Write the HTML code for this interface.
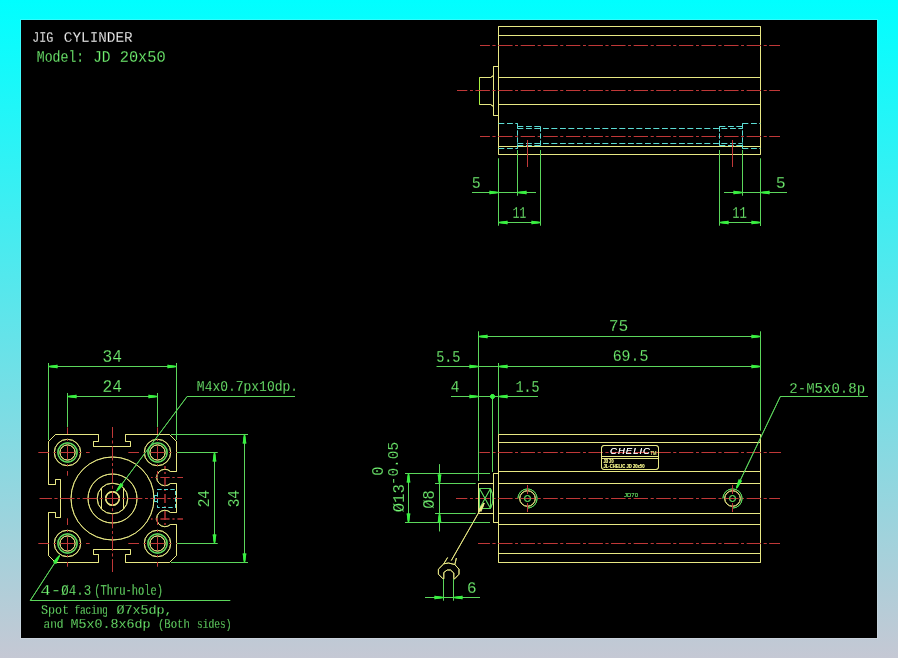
<!DOCTYPE html>
<html><head><meta charset="utf-8"><title>JIG CYLINDER JD 20x50</title><style>
html,body{margin:0;padding:0;width:898px;height:658px;overflow:hidden;background:linear-gradient(to bottom,#00ffff 0%,#c5c8d4 100%);}
svg{position:absolute;left:0;top:0;display:block;}
text{font-family:"Liberation Mono",monospace;stroke:#000;stroke-width:0.3px;}
text.s{font-family:"Liberation Sans",sans-serif;stroke:none;}
</style></head><body>
<svg width="898" height="658" viewBox="0 0 898 658">
<defs><filter id="soft" x="0" y="0" width="898" height="658" filterUnits="userSpaceOnUse"><feGaussianBlur in="SourceGraphic" stdDeviation="0.7" result="b"/><feComponentTransfer in="b" result="b2"><feFuncA type="linear" slope="0.8"/></feComponentTransfer><feMerge><feMergeNode in="b2"/><feMergeNode in="SourceGraphic"/></feMerge></filter></defs>
<rect x="20.5" y="19.5" width="857" height="619" fill="none" stroke="rgba(255,255,255,0.18)"/>
<rect x="21" y="20" width="856" height="618" fill="#000"/>
<g filter="url(#soft)">
<line x1="498.5" y1="26.5" x2="760.5" y2="26.5" stroke="#e8e884" stroke-width="1"/>
<line x1="498.5" y1="35.5" x2="760.5" y2="35.5" stroke="#e8e884" stroke-width="1"/>
<line x1="498.5" y1="77.5" x2="760.5" y2="77.5" stroke="#e8e884" stroke-width="1"/>
<line x1="498.5" y1="104.5" x2="760.5" y2="104.5" stroke="#e8e884" stroke-width="1"/>
<line x1="498.5" y1="146.5" x2="760.5" y2="146.5" stroke="#e8e884" stroke-width="1"/>
<line x1="498.5" y1="154.5" x2="760.5" y2="154.5" stroke="#e8e884" stroke-width="1"/>
<line x1="498.5" y1="26.5" x2="498.5" y2="154.5" stroke="#e8e884" stroke-width="1"/>
<line x1="760.5" y1="26.5" x2="760.5" y2="154.5" stroke="#e8e884" stroke-width="1"/>
<polyline points="498.5,66.5 493.5,66.5 493.5,115.5 498.5,115.5" fill="none" stroke="#e8e884" stroke-width="1"/>
<polyline points="493.5,75.5 490.5,77.5 479.5,77.5" fill="none" stroke="#e8e884" stroke-width="1"/>
<polyline points="493.5,106.5 490.5,104.5 479.5,104.5" fill="none" stroke="#e8e884" stroke-width="1"/>
<line x1="479.5" y1="77.5" x2="479.5" y2="104.5" stroke="#a8f040" stroke-width="1"/>
<line x1="480" y1="45.5" x2="780" y2="45.5" stroke="#c03838" stroke-dasharray="14.2 2.8 2.8 2.8" stroke-dashoffset="4.40"/>
<line x1="457" y1="90.5" x2="780" y2="90.5" stroke="#c03838" stroke-dasharray="14.2 2.8 2.8 2.8" stroke-dashoffset="4.00"/>
<line x1="480" y1="136.5" x2="780" y2="136.5" stroke="#c03838" stroke-dasharray="14.2 2.8 2.8 2.8" stroke-dashoffset="4.40"/>
<line x1="498.5" y1="123.5" x2="517.5" y2="123.5" stroke="#5cdcd4" stroke-width="1" stroke-dasharray="5.7 2.8"/>
<line x1="517.5" y1="123.5" x2="517.5" y2="148.5" stroke="#5cdcd4" stroke-width="1" stroke-dasharray="5 2"/>
<line x1="517.5" y1="126.5" x2="540.5" y2="126.5" stroke="#5cdcd4" stroke-width="1" stroke-dasharray="5.7 2.8"/>
<line x1="540.5" y1="126.5" x2="540.5" y2="145.5" stroke="#5cdcd4" stroke-width="1" stroke-dasharray="5 2"/>
<line x1="517.5" y1="128.5" x2="742.5" y2="128.5" stroke="#5cdcd4" stroke-width="1" stroke-dasharray="5.7 2.8"/>
<line x1="517.5" y1="143.5" x2="742.5" y2="143.5" stroke="#5cdcd4" stroke-width="1" stroke-dasharray="5.7 2.8"/>
<line x1="517.5" y1="145.5" x2="540.5" y2="145.5" stroke="#5cdcd4" stroke-width="1" stroke-dasharray="5.7 2.8"/>
<line x1="498.5" y1="148.5" x2="517.5" y2="148.5" stroke="#5cdcd4" stroke-width="1" stroke-dasharray="5.7 2.8"/>
<line x1="742.5" y1="123.5" x2="760.5" y2="123.5" stroke="#5cdcd4" stroke-width="1" stroke-dasharray="5.7 2.8"/>
<line x1="742.5" y1="123.5" x2="742.5" y2="148.5" stroke="#5cdcd4" stroke-width="1" stroke-dasharray="5 2"/>
<line x1="719.5" y1="126.5" x2="742.5" y2="126.5" stroke="#5cdcd4" stroke-width="1" stroke-dasharray="5.7 2.8"/>
<line x1="719.5" y1="126.5" x2="719.5" y2="145.5" stroke="#5cdcd4" stroke-width="1" stroke-dasharray="5 2"/>
<line x1="719.5" y1="145.5" x2="742.5" y2="145.5" stroke="#5cdcd4" stroke-width="1" stroke-dasharray="5.7 2.8"/>
<line x1="742.5" y1="148.5" x2="760.5" y2="148.5" stroke="#5cdcd4" stroke-width="1" stroke-dasharray="5.7 2.8"/>
<line x1="527.5" y1="140" x2="527.5" y2="167" stroke="#c03838" stroke-width="1"/>
<line x1="732.5" y1="140" x2="732.5" y2="167" stroke="#c03838" stroke-width="1"/>
<line x1="498.5" y1="158.5" x2="498.5" y2="225.5" stroke="#5cd65c" stroke-width="1"/>
<line x1="517.5" y1="150" x2="517.5" y2="195.5" stroke="#5cd65c" stroke-width="1"/>
<line x1="540.5" y1="150" x2="540.5" y2="225.5" stroke="#5cd65c" stroke-width="1"/>
<line x1="719.5" y1="150" x2="719.5" y2="225.5" stroke="#5cd65c" stroke-width="1"/>
<line x1="742.5" y1="150" x2="742.5" y2="195.5" stroke="#5cd65c" stroke-width="1"/>
<line x1="760.5" y1="158.5" x2="760.5" y2="226" stroke="#5cd65c" stroke-width="1"/>
<line x1="472" y1="192.5" x2="536" y2="192.5" stroke="#5cd65c" stroke-width="1"/>
<polygon points="498.50,193.00 495.50,193.60 489.50,194.30 489.50,190.70 495.50,191.40 498.50,192.00" fill="#38f040"/>
<polygon points="517.50,192.00 520.50,191.40 526.50,190.70 526.50,194.30 520.50,193.60 517.50,193.00" fill="#38f040"/>
<line x1="498.5" y1="222.5" x2="540.5" y2="222.5" stroke="#5cd65c" stroke-width="1"/>
<polygon points="498.50,222.00 501.50,221.40 507.50,220.70 507.50,224.30 501.50,223.60 498.50,223.00" fill="#38f040"/>
<polygon points="540.50,223.00 537.50,223.60 531.50,224.30 531.50,220.70 537.50,221.40 540.50,222.00" fill="#38f040"/>
<line x1="724" y1="192.5" x2="787" y2="192.5" stroke="#5cd65c" stroke-width="1"/>
<polygon points="742.50,193.00 739.50,193.60 733.50,194.30 733.50,190.70 739.50,191.40 742.50,192.00" fill="#38f040"/>
<polygon points="760.50,192.00 763.50,191.40 769.50,190.70 769.50,194.30 763.50,193.60 760.50,193.00" fill="#38f040"/>
<line x1="719.5" y1="222.5" x2="760.5" y2="222.5" stroke="#5cd65c" stroke-width="1"/>
<polygon points="719.50,222.00 722.50,221.40 728.50,220.70 728.50,224.30 722.50,223.60 719.50,223.00" fill="#38f040"/>
<polygon points="760.50,223.00 757.50,223.60 751.50,224.30 751.50,220.70 757.50,221.40 760.50,222.00" fill="#38f040"/>
<line x1="498.5" y1="434.5" x2="760.5" y2="434.5" stroke="#e8e884" stroke-width="1"/>
<line x1="498.5" y1="442.5" x2="760.5" y2="442.5" stroke="#e8e884" stroke-width="1"/>
<line x1="498.5" y1="471.5" x2="760.5" y2="471.5" stroke="#e8e884" stroke-width="1"/>
<line x1="498.5" y1="483.5" x2="760.5" y2="483.5" stroke="#e8e884" stroke-width="1"/>
<line x1="498.5" y1="513.5" x2="760.5" y2="513.5" stroke="#e8e884" stroke-width="1"/>
<line x1="498.5" y1="524.5" x2="760.5" y2="524.5" stroke="#e8e884" stroke-width="1"/>
<line x1="498.5" y1="553.5" x2="760.5" y2="553.5" stroke="#e8e884" stroke-width="1"/>
<line x1="498.5" y1="562.5" x2="760.5" y2="562.5" stroke="#e8e884" stroke-width="1"/>
<line x1="498.5" y1="434.5" x2="498.5" y2="562.5" stroke="#e8e884" stroke-width="1"/>
<line x1="760.5" y1="434.5" x2="760.5" y2="562.5" stroke="#e8e884" stroke-width="1"/>
<line x1="479.6" y1="452.5" x2="781" y2="452.5" stroke="#c03838" stroke-dasharray="14.2 2.8 2.8 2.8" stroke-dashoffset="4.00"/>
<line x1="456" y1="498.5" x2="780" y2="498.5" stroke="#c03838" stroke-dasharray="14.2 2.8 2.8 2.8" stroke-dashoffset="3.00"/>
<line x1="478" y1="543.5" x2="780" y2="543.5" stroke="#c03838" stroke-dasharray="14.2 2.8 2.8 2.8" stroke-dashoffset="2.40"/>
<polyline points="498.5,473.5 493.5,473.5 493.5,522.5 498.5,522.5" fill="none" stroke="#e8e884" stroke-width="1"/>
<polyline points="493.5,483.5 478.5,483.5 478.5,513.5 493.5,513.5" fill="none" stroke="#e8e884" stroke-width="1"/>
<polygon points="479.5,488.5 490.5,488.5 490.5,508.5 479.5,508.5" fill="none" stroke="#5cd65c" stroke-width="1"/>
<line x1="479.5" y1="488.5" x2="490.5" y2="508.5" stroke="#5cd65c" stroke-width="1"/>
<line x1="490.5" y1="488.5" x2="479.5" y2="508.5" stroke="#5cd65c" stroke-width="1"/>
<path d="M490.5,488.5 Q495.5,498.5 490.5,508.5" stroke="#5cd65c" fill="none"/>
<circle cx="527.5" cy="498.5" r="7.8" fill="none" stroke="#e8e884" stroke-width="1"/>
<path d="M517.9,498.5 A9.6,9.6 0 1 1 527.5,508.1" stroke="#5cd65c" fill="none"/>
<circle cx="527.5" cy="498.5" r="3" fill="none" stroke="#5cd65c" stroke-width="1"/>
<line x1="527.5" y1="485" x2="527.5" y2="494" stroke="#c03838" stroke-width="1"/>
<line x1="527.5" y1="503" x2="527.5" y2="512" stroke="#c03838" stroke-width="1"/>
<circle cx="732.5" cy="498.5" r="7.8" fill="none" stroke="#e8e884" stroke-width="1"/>
<path d="M722.9,498.5 A9.6,9.6 0 1 1 732.5,508.1" stroke="#5cd65c" fill="none"/>
<circle cx="732.5" cy="498.5" r="3" fill="none" stroke="#5cd65c" stroke-width="1"/>
<line x1="732.5" y1="485" x2="732.5" y2="494" stroke="#c03838" stroke-width="1"/>
<line x1="732.5" y1="503" x2="732.5" y2="512" stroke="#c03838" stroke-width="1"/>
<rect x="601.5" y="445.5" width="57" height="24" rx="2.5" fill="none" stroke="#e8e884"/>
<line x1="601.5" y1="456.5" x2="658.5" y2="456.5" stroke="#e8e884" stroke-width="1"/>
<line x1="601.5" y1="458.5" x2="658.5" y2="458.5" stroke="#e8e884" stroke-width="1"/>
<text class="s" x="610" y="454.3" fill="#ffffff" font-size="9.5" textLength="41" lengthAdjust="spacingAndGlyphs" font-style="italic" letter-spacing="1">CHELIC</text>
<text class="s" x="650.5" y="455" fill="#e8e884" font-size="4.5" textLength="6" lengthAdjust="spacingAndGlyphs" >TM</text>
<text class="s" x="603.5" y="462.8" fill="#e8e884" font-size="4.5" textLength="10" lengthAdjust="spacingAndGlyphs" font-weight="bold">JD 20</text>
<text class="s" x="603.5" y="468.2" fill="#e8e884" font-size="4.5" textLength="41" lengthAdjust="spacingAndGlyphs" font-weight="bold">JL-CHELIC JD 20x50</text>
<text class="s" x="624" y="497" fill="#5cd65c" font-size="6" textLength="14" lengthAdjust="spacingAndGlyphs" >JD70</text>
<line x1="478.5" y1="331.5" x2="478.5" y2="481" stroke="#5cd65c" stroke-width="1"/>
<line x1="760.5" y1="331.5" x2="760.5" y2="430.5" stroke="#5cd65c" stroke-width="1"/>
<line x1="498.5" y1="363" x2="498.5" y2="434" stroke="#5cd65c" stroke-width="1"/>
<line x1="492.5" y1="396" x2="492.5" y2="472" stroke="#5cd65c" stroke-width="1"/>
<line x1="405" y1="473.5" x2="490" y2="473.5" stroke="#5cd65c" stroke-width="1"/>
<line x1="405" y1="522.5" x2="490" y2="522.5" stroke="#5cd65c" stroke-width="1"/>
<line x1="435" y1="483.5" x2="475.5" y2="483.5" stroke="#5cd65c" stroke-width="1"/>
<line x1="435" y1="513.5" x2="475.5" y2="513.5" stroke="#5cd65c" stroke-width="1"/>
<line x1="478.5" y1="336.5" x2="760.5" y2="336.5" stroke="#5cd65c" stroke-width="1"/>
<polygon points="478.50,336.00 481.50,335.40 487.50,334.70 487.50,338.30 481.50,337.60 478.50,337.00" fill="#38f040"/>
<polygon points="760.50,337.00 757.50,337.60 751.50,338.30 751.50,334.70 757.50,335.40 760.50,336.00" fill="#38f040"/>
<line x1="436.7" y1="366.5" x2="760.5" y2="366.5" stroke="#5cd65c" stroke-width="1"/>
<polygon points="478.50,367.00 475.50,367.60 469.50,368.30 469.50,364.70 475.50,365.40 478.50,366.00" fill="#38f040"/>
<polygon points="498.50,366.00 501.50,365.40 507.50,364.70 507.50,368.30 501.50,367.60 498.50,367.00" fill="#38f040"/>
<polygon points="760.50,367.00 757.50,367.60 751.50,368.30 751.50,364.70 757.50,365.40 760.50,366.00" fill="#38f040"/>
<line x1="451" y1="396.5" x2="537.8" y2="396.5" stroke="#5cd65c" stroke-width="1"/>
<polygon points="478.50,397.00 475.50,397.60 469.50,398.30 469.50,394.70 475.50,395.40 478.50,396.00" fill="#38f040"/>
<polygon points="498.50,396.00 501.50,395.40 507.50,394.70 507.50,398.30 501.50,397.60 498.50,397.00" fill="#38f040"/>
<circle cx="492.5" cy="396.5" r="2" fill="#38f040" stroke="#38f040" stroke-width="1"/>
<line x1="408.5" y1="473.5" x2="408.5" y2="522.5" stroke="#5cd65c" stroke-width="1"/>
<polygon points="409.00,473.50 409.60,476.50 410.30,482.50 406.70,482.50 407.40,476.50 408.00,473.50" fill="#38f040"/>
<polygon points="408.00,522.50 407.40,519.50 406.70,513.50 410.30,513.50 409.60,519.50 409.00,522.50" fill="#38f040"/>
<line x1="439.5" y1="464.3" x2="439.5" y2="531.3" stroke="#5cd65c" stroke-width="1"/>
<polygon points="439.00,483.50 438.40,480.50 437.70,474.50 441.30,474.50 440.60,480.50 440.00,483.50" fill="#38f040"/>
<polygon points="440.00,513.50 440.60,516.50 441.30,522.50 437.70,522.50 438.40,516.50 439.00,513.50" fill="#38f040"/>
<polyline points="867.8,396.5 780.3,396.5 736.5,488.2" fill="none" stroke="#5cd65c" stroke-width="1"/>
<polygon points="736.05,487.98 736.80,485.02 738.75,479.30 742.00,480.85 738.79,485.97 736.95,488.42" fill="#38f040"/>
<line x1="484.1" y1="503.1" x2="451.3" y2="560.5" stroke="#e8e884" stroke-width="1"/>
<polygon points="484.53,503.35 483.57,506.25 481.20,511.81 478.07,510.02 481.66,505.16 483.67,502.85" fill="#e8e884"/>
<polygon points="443,578.8 438.4,574.2 438.4,569.2 443.8,563.8 448.5,563 454.7,564.5 459,569.2 459,574.2 454.7,578.8 453.8,578.8 453.8,573 450.5,570 447.2,570 443.8,572.5 443.8,578.8" fill="none" stroke="#e8e884" stroke-width="1"/>
<line x1="443.8" y1="563.8" x2="447.6" y2="557.5" stroke="#e8e884" stroke-width="1"/>
<line x1="454.7" y1="565" x2="456.4" y2="558" stroke="#e8e884" stroke-width="1"/>
<line x1="443.5" y1="579" x2="443.5" y2="600.5" stroke="#5cd65c" stroke-width="1"/>
<line x1="453.5" y1="579" x2="453.5" y2="600.5" stroke="#5cd65c" stroke-width="1"/>
<line x1="425" y1="597.5" x2="480" y2="597.5" stroke="#5cd65c" stroke-width="1"/>
<polygon points="443.50,598.00 440.50,598.60 434.50,599.30 434.50,595.70 440.50,596.40 443.50,597.00" fill="#38f040"/>
<polygon points="453.50,597.00 456.50,596.40 462.50,595.70 462.50,599.30 456.50,598.60 453.50,598.00" fill="#38f040"/>
<path d="M48.5,441.5 L55.5,434.5 L98.5,434.5 L98.5,441.5 L93.5,441.5 L93.5,446.5 L130.5,446.5 L130.5,441.5 L125.5,441.5 L125.5,434.5 L169.5,434.5 L176.5,441.5 L176.5,471.5 L170.5,471.5 A8.2,8.2 0 1 0 170.5,483.5 L176.5,483.5 L176.5,512.5 L170.5,512.5 A8.2,8.2 0 1 0 170.5,524.5 L176.5,524.5 L176.5,555.5 L169.5,562.5 L125.5,562.5 L125.5,554.5 L130.5,554.5 L130.5,549.5 L93.5,549.5 L93.5,554.5 L98.5,554.5 L98.5,562.5 L55.5,562.5 L48.5,555.5 L48.5,512.5 L55.5,512.5 L55.5,517.5 L60.5,517.5 L60.5,479.5 L55.5,479.5 L55.5,484.5 L48.5,484.5 Z" fill="none" stroke="#e8e884"/>
<circle cx="112.5" cy="498.5" r="41.5" fill="none" stroke="#e8e884" stroke-width="1"/>
<circle cx="112.5" cy="498.5" r="24.5" fill="none" stroke="#e8e884" stroke-width="1"/>
<circle cx="112.5" cy="498.5" r="15.3" fill="none" stroke="#e8e884" stroke-width="1"/>
<line x1="101.5" y1="488" x2="101.5" y2="509" stroke="#e8e884" stroke-width="1"/>
<line x1="123.5" y1="488" x2="123.5" y2="509" stroke="#e8e884" stroke-width="1"/>
<circle cx="112.5" cy="498.5" r="6.8" fill="none" stroke="#e8e884" stroke-width="1.4"/>
<circle cx="67.5" cy="452.5" r="13.2" fill="none" stroke="#e8e884" stroke-width="1"/>
<circle cx="67.5" cy="452.5" r="9.6" fill="none" stroke="#5cd65c" stroke-width="1.3"/>
<circle cx="67.5" cy="452.5" r="7.6" fill="none" stroke="#e8e884" stroke-width="1"/>
<line x1="38.5" y1="452.5" x2="89.5" y2="452.5" stroke="#c03838" stroke-dasharray="13 5 2 5" stroke-dashoffset="2.50"/>
<line x1="67.5" y1="427.5" x2="67.5" y2="475.5" stroke="#c03838" stroke-dasharray="13 5 2 5" stroke-dashoffset="6.50"/>
<circle cx="157.5" cy="452.5" r="13.2" fill="none" stroke="#e8e884" stroke-width="1"/>
<circle cx="157.5" cy="452.5" r="9.6" fill="none" stroke="#5cd65c" stroke-width="1.3"/>
<circle cx="157.5" cy="452.5" r="7.6" fill="none" stroke="#e8e884" stroke-width="1"/>
<line x1="128.5" y1="452.5" x2="179.5" y2="452.5" stroke="#c03838" stroke-dasharray="13 5 2 5" stroke-dashoffset="2.50"/>
<line x1="157.5" y1="427.5" x2="157.5" y2="475.5" stroke="#c03838" stroke-dasharray="13 5 2 5" stroke-dashoffset="6.50"/>
<circle cx="67.5" cy="543.5" r="13.2" fill="none" stroke="#e8e884" stroke-width="1"/>
<circle cx="67.5" cy="543.5" r="9.6" fill="none" stroke="#5cd65c" stroke-width="1.3"/>
<circle cx="67.5" cy="543.5" r="7.6" fill="none" stroke="#e8e884" stroke-width="1"/>
<line x1="38.5" y1="543.5" x2="89.5" y2="543.5" stroke="#c03838" stroke-dasharray="13 5 2 5" stroke-dashoffset="2.50"/>
<line x1="67.5" y1="518.5" x2="67.5" y2="566.5" stroke="#c03838" stroke-dasharray="13 5 2 5" stroke-dashoffset="6.50"/>
<circle cx="157.5" cy="543.5" r="13.2" fill="none" stroke="#e8e884" stroke-width="1"/>
<circle cx="157.5" cy="543.5" r="9.6" fill="none" stroke="#5cd65c" stroke-width="1.3"/>
<circle cx="157.5" cy="543.5" r="7.6" fill="none" stroke="#e8e884" stroke-width="1"/>
<line x1="128.5" y1="543.5" x2="179.5" y2="543.5" stroke="#c03838" stroke-dasharray="13 5 2 5" stroke-dashoffset="2.50"/>
<line x1="157.5" y1="518.5" x2="157.5" y2="566.5" stroke="#c03838" stroke-dasharray="13 5 2 5" stroke-dashoffset="6.50"/>
<line x1="39.7" y1="498.5" x2="182" y2="498.5" stroke="#c03838" stroke-dasharray="14.2 2.8 2.8 2.8" stroke-dashoffset="2.10"/>
<line x1="112.5" y1="427" x2="112.5" y2="572" stroke="#c03838" stroke-dasharray="14.2 2.8 2.8 2.8" stroke-dashoffset="3.40"/>
<line x1="151" y1="477.5" x2="183" y2="477.5" stroke="#c03838" stroke-dasharray="9 3 2 3" stroke-dashoffset="7.50"/>
<line x1="151" y1="519" x2="183" y2="519" stroke="#c03838" stroke-dasharray="9 3 2 3" stroke-dashoffset="7.50"/>
<line x1="165" y1="466" x2="165" y2="528" stroke="#c03838" stroke-dasharray="9 3 2 3" stroke-dashoffset="6.00"/>
<polygon points="157.5,489.5 175.5,489.5 175.5,507.5 157.5,507.5" fill="none" stroke="#5cdcd4" stroke-width="1" stroke-dasharray="4 2.5"/>
<polyline points="157.5,495.5 154.5,495.5 154.5,501.5 157.5,501.5" fill="none" stroke="#5cdcd4" stroke-width="1"/>
<line x1="48.5" y1="363" x2="48.5" y2="440" stroke="#5cd65c" stroke-width="1"/>
<line x1="176.5" y1="363" x2="176.5" y2="440" stroke="#5cd65c" stroke-width="1"/>
<line x1="67.5" y1="393" x2="67.5" y2="427" stroke="#5cd65c" stroke-width="1"/>
<line x1="157.5" y1="393" x2="157.5" y2="427" stroke="#5cd65c" stroke-width="1"/>
<line x1="48.5" y1="366.5" x2="176.5" y2="366.5" stroke="#5cd65c" stroke-width="1"/>
<polygon points="48.50,366.00 51.50,365.40 57.50,364.70 57.50,368.30 51.50,367.60 48.50,367.00" fill="#38f040"/>
<polygon points="176.50,367.00 173.50,367.60 167.50,368.30 167.50,364.70 173.50,365.40 176.50,366.00" fill="#38f040"/>
<line x1="67.5" y1="396.5" x2="157.5" y2="396.5" stroke="#5cd65c" stroke-width="1"/>
<polygon points="67.50,396.00 70.50,395.40 76.50,394.70 76.50,398.30 70.50,397.60 67.50,397.00" fill="#38f040"/>
<polygon points="157.50,397.00 154.50,397.60 148.50,398.30 148.50,394.70 154.50,395.40 157.50,396.00" fill="#38f040"/>
<line x1="171" y1="434.5" x2="248" y2="434.5" stroke="#5cd65c" stroke-width="1"/>
<line x1="171" y1="562.5" x2="248" y2="562.5" stroke="#5cd65c" stroke-width="1"/>
<line x1="177" y1="452.5" x2="217.5" y2="452.5" stroke="#5cd65c" stroke-width="1"/>
<line x1="177" y1="543.5" x2="217.5" y2="543.5" stroke="#5cd65c" stroke-width="1"/>
<line x1="244.5" y1="434.5" x2="244.5" y2="562.5" stroke="#5cd65c" stroke-width="1"/>
<polygon points="245.00,434.50 245.60,437.50 246.30,443.50 242.70,443.50 243.40,437.50 244.00,434.50" fill="#38f040"/>
<polygon points="244.00,562.50 243.40,559.50 242.70,553.50 246.30,553.50 245.60,559.50 245.00,562.50" fill="#38f040"/>
<line x1="214.5" y1="452.5" x2="214.5" y2="543.5" stroke="#5cd65c" stroke-width="1"/>
<polygon points="215.00,452.50 215.60,455.50 216.30,461.50 212.70,461.50 213.40,455.50 214.00,452.50" fill="#38f040"/>
<polygon points="214.00,543.50 213.40,540.50 212.70,534.50 216.30,534.50 215.60,540.50 215.00,543.50" fill="#38f040"/>
<polyline points="295,396.5 187.1,396.5 116.6,491.2" fill="none" stroke="#5cd65c" stroke-width="1"/>
<polygon points="116.20,490.90 117.51,488.14 120.53,482.90 123.42,485.05 119.27,489.45 117.00,491.50" fill="#38f040"/>
<polyline points="230.2,600.5 30.3,600.5 59.5,555.5" fill="none" stroke="#5cd65c" stroke-width="1"/>
<polygon points="59.92,555.77 58.79,558.62 56.11,564.03 53.09,562.07 56.94,557.42 59.08,555.23" fill="#38f040"/>
<text x="32.31" y="41.5" fill="#ffffff" font-size="14.88" textLength="21.11" lengthAdjust="spacingAndGlyphs">JIG</text>
<text x="63.81" y="41.5" fill="#ffffff" font-size="14.88" textLength="68.91" lengthAdjust="spacingAndGlyphs">CYLINDER</text>
<text x="36.72" y="61.5" fill="#74f874" font-size="15.94" textLength="47.54" lengthAdjust="spacingAndGlyphs">Model:</text>
<text x="93.22" y="61.5" fill="#74f874" font-size="15.94" textLength="17.32" lengthAdjust="spacingAndGlyphs">JD</text>
<text x="119.72" y="61.5" fill="#74f874" font-size="15.94" textLength="45.95" lengthAdjust="spacingAndGlyphs">20x50</text>
<text x="471.70" y="187.7" fill="#74f874" font-size="16.24" textLength="8.88" lengthAdjust="spacingAndGlyphs">5</text>
<text x="512.75" y="217.5" fill="#74f874" font-size="15.64" textLength="13.54" lengthAdjust="spacingAndGlyphs">11</text>
<text x="775.70" y="187.7" fill="#74f874" font-size="16.24" textLength="9.87" lengthAdjust="spacingAndGlyphs">5</text>
<text x="732.25" y="217.5" fill="#74f874" font-size="15.64" textLength="14.61" lengthAdjust="spacingAndGlyphs">11</text>
<text x="608.72" y="330.8" fill="#74f874" font-size="15.94" textLength="19.48" lengthAdjust="spacingAndGlyphs">75</text>
<text x="436.13" y="361.8" fill="#74f874" font-size="17.16" textLength="24.32" lengthAdjust="spacingAndGlyphs">5.5</text>
<text x="612.66" y="361.4" fill="#74f874" font-size="16.70" textLength="35.67" lengthAdjust="spacingAndGlyphs">69.5</text>
<text x="450.66" y="392" fill="#74f874" font-size="16.70" textLength="8.64" lengthAdjust="spacingAndGlyphs">4</text>
<text x="515.66" y="392" fill="#74f874" font-size="16.70" textLength="23.79" lengthAdjust="spacingAndGlyphs">1.5</text>
<text x="789.31" y="392.8" fill="#74f874" font-size="14.88" textLength="75.83" lengthAdjust="spacingAndGlyphs">2-M5x0.8p</text>
<text x="102.60" y="362" fill="#74f874" font-size="17.46" textLength="19.47" lengthAdjust="spacingAndGlyphs">34</text>
<text x="102.59" y="392.4" fill="#74f874" font-size="17.61" textLength="19.47" lengthAdjust="spacingAndGlyphs">24</text>
<text x="196.85" y="390.9" fill="#74f874" font-size="14.42" textLength="101.19" lengthAdjust="spacingAndGlyphs">M4x0.7px10dp.</text>
<text x="40.36" y="594.8" fill="#74f874" font-size="14.27" textLength="20.85" lengthAdjust="spacingAndGlyphs">4-</text>
<text x="61.36" y="594.8" fill="#74f874" font-size="14.27" textLength="29.73" lengthAdjust="spacingAndGlyphs">Ø4.3</text>
<text x="94.36" y="594.8" fill="#74f874" font-size="14.27" textLength="68.68" lengthAdjust="spacingAndGlyphs">(Thru-hole)</text>
<text x="40.92" y="613.9" fill="#74f874" font-size="13.51" textLength="28.12" lengthAdjust="spacingAndGlyphs">Spot</text>
<text x="74.42" y="613.9" fill="#74f874" font-size="13.51" textLength="33.53" lengthAdjust="spacingAndGlyphs">facing</text>
<text x="116.42" y="613.9" fill="#74f874" font-size="13.51" textLength="56.19" lengthAdjust="spacingAndGlyphs">Ø7x5dp,</text>
<text x="43.47" y="627.8" fill="#74f874" font-size="12.90" textLength="19.99" lengthAdjust="spacingAndGlyphs">and</text>
<text x="70.47" y="627.8" fill="#74f874" font-size="12.90" textLength="80.10" lengthAdjust="spacingAndGlyphs">M5x0.8x6dp</text>
<text x="157.97" y="627.8" fill="#74f874" font-size="12.90" textLength="31.89" lengthAdjust="spacingAndGlyphs">(Both</text>
<text x="196.97" y="627.8" fill="#74f874" font-size="12.90" textLength="34.57" lengthAdjust="spacingAndGlyphs">sides)</text>
<text x="467.12" y="592.8" fill="#74f874" font-size="17.31" textLength="9.53" lengthAdjust="spacingAndGlyphs">6</text>
<text x="209" y="507.34" fill="#74f874" font-size="16.70" textLength="17.38" lengthAdjust="spacingAndGlyphs" transform="rotate(-90 209 507.34)">24</text>
<text x="239.3" y="507.32" fill="#74f874" font-size="16.55" textLength="17.38" lengthAdjust="spacingAndGlyphs" transform="rotate(-90 239.3 507.32)">34</text>
<text x="403.9" y="512.32" fill="#74f874" font-size="16.55" textLength="28.16" lengthAdjust="spacingAndGlyphs" transform="rotate(-90 403.9 512.32)">Ø13</text>
<text x="397.8" y="485.19" fill="#74f874" font-size="14.88" textLength="43.22" lengthAdjust="spacingAndGlyphs" transform="rotate(-90 397.8 485.19)">-0.05</text>
<text x="382.6" y="475.75" fill="#74f874" font-size="15.64" textLength="9.32" lengthAdjust="spacingAndGlyphs" transform="rotate(-90 382.6 475.75)">0</text>
<text x="433.8" y="508.79" fill="#74f874" font-size="16.09" textLength="18.36" lengthAdjust="spacingAndGlyphs" transform="rotate(-90 433.8 508.79)">Ø8</text>
</g>
</svg>
</body></html>
